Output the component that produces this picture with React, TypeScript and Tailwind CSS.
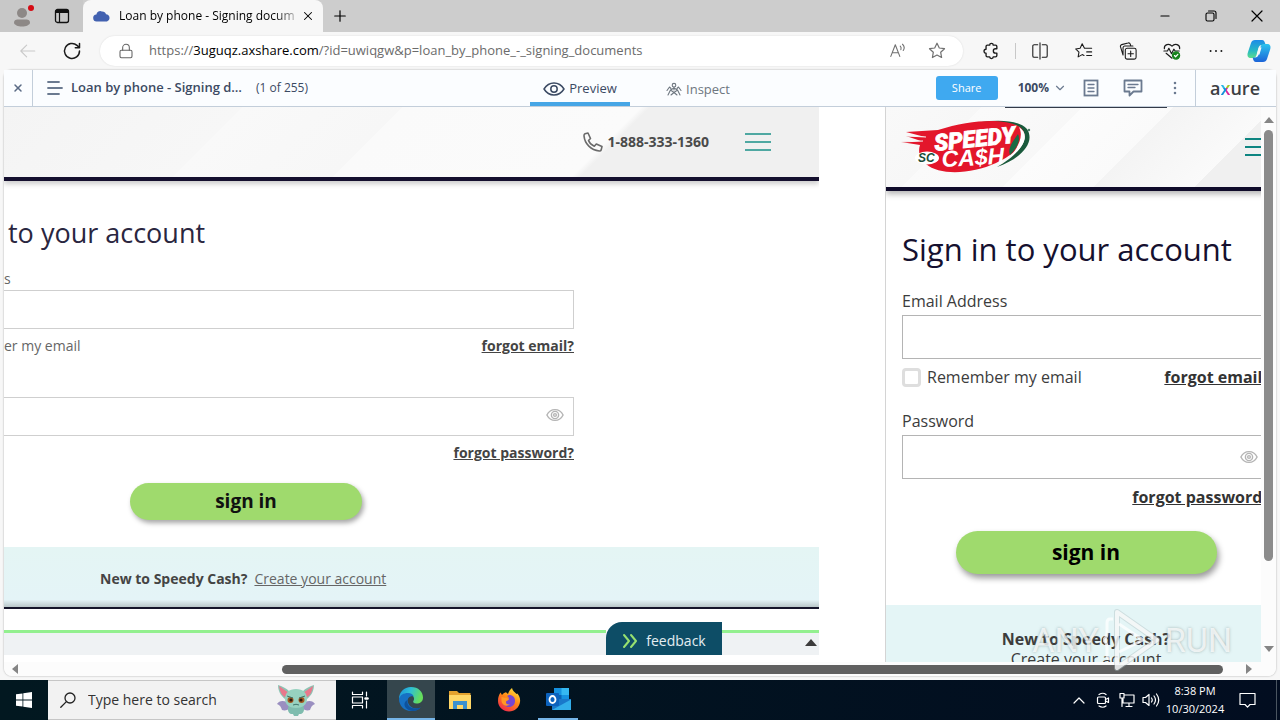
import React from "react";
import type { ReactNode } from "react";
import { ChevronDown, Lock, Minus, Plus, X } from "lucide-react";

interface IconProps {
  children: ReactNode;
  className?: string;
  box?: string;
  stroke?: number;
}

function Icon({ children, className = "size-5", box = "0 0 20 20", stroke = 1.2 }: IconProps) {
  return (
    <svg
      viewBox={box}
      className={className}
      fill="none"
      stroke="currentColor"
      strokeWidth={stroke}
      strokeLinecap="round"
      strokeLinejoin="round"
      aria-hidden="true"
    >
      {children}
    </svg>
  );
}

function ToolButton({ label, children }: { label: string; children: ReactNode }) {
  return (
    <button aria-label={label} className="flex h-8 w-11 shrink-0 items-center justify-center text-[#1b1b1b]">
      {children}
    </button>
  );
}

const STAR = "M10 2.2 12.3 7l5.2.7-3.8 3.6.9 5.2L10 14l-4.6 2.5.9-5.2L2.5 7.7 7.7 7z";

function TitleBar() {
  return (
    <header className="flex h-8 shrink-0 items-stretch bg-[#cdcdcd]">
      <div className="flex w-[83px] items-center gap-5 bg-[#c8c8c8] pl-3">
        <button aria-label="Profile">
          <svg viewBox="0 0 22 24" className="h-6 w-[22px]">
            <circle cx="10" cy="9" r="5" fill="#8d8886" />
            <path d="M2 18.500c0-2 1.500-3 3.500-3h9c2 0 3.500 1 3.500 3 0 2.500-4 4-8 4s-8-1.500-8-4z" fill="#8d8886" />
            <circle cx="19" cy="4" r="3" fill="#d50b14" />
          </svg>
        </button>
        <button aria-label="Tab actions">
          <svg viewBox="0 0 16 16" className="size-4" fill="none" stroke="#111">
            <rect x="1.500" y="1.500" width="13" height="13" rx="2" strokeWidth="1.300" />
            <path d="M1.500 3.500h13" strokeWidth="3" />
            <path d="M5.500 4v10" strokeWidth="1.200" />
          </svg>
        </button>
      </div>
      <div className="flex w-60 items-center rounded-t-lg bg-[#f7f7f7] pr-2 pl-2.5">
        <svg viewBox="0 0 18 12" className="h-3 w-[18px] shrink-0">
          <path
            d="M4 11.500a3.500 3.500 0 0 1-.6-7A3.800 3.800 0 0 1 9 1.500a4 4 0 0 1 4 2.800 3.700 3.700 0 0 1 1 7.200z"
            fill="#4261b0"
          />
        </svg>
        <span className="ml-2 flex-1 overflow-hidden bg-linear-to-r from-black from-85% to-[#ccc] bg-clip-text text-xs whitespace-nowrap text-transparent">
          Loan by phone - Signing docum
        </span>
        <button aria-label="Close tab" className="ml-1">
          <X className="size-3.5 text-black" strokeWidth={1.8} />
        </button>
      </div>
      <button aria-label="New tab" className="flex w-[34px] items-center justify-center">
        <Plus className="size-[18px] text-black" strokeWidth={1.6} />
      </button>
      <div className="flex-1" />
      <button aria-label="Minimize" className="flex w-[46px] items-center justify-center">
        <Minus className="size-3.5 text-black" strokeWidth={1.8} />
      </button>
      <button aria-label="Restore" className="flex w-[46px] items-center justify-center">
        <Icon className="size-3 text-black" box="0 0 12 12" stroke={1.1}>
          <rect x="1" y="3" width="8" height="8" rx="1.500" />
          <path d="M3.500 1H9a2 2 0 0 1 2 2v5.500" />
        </Icon>
      </button>
      <button aria-label="Close" className="flex w-[46px] items-center justify-center">
        <Icon className="size-3 text-black" box="0 0 12 12" stroke={1.2}>
          <path d="m1 1 10 10M11 1 1 11" />
        </Icon>
      </button>
    </header>
  );
}

function AddressBar() {
  return (
    <nav className="flex h-[38px] shrink-0 items-center bg-[#f7f7f7] pl-1.5">
      <button aria-label="Back" className="flex h-8 w-11 items-center justify-center text-[#c9c9c9]">
        <Icon className="size-[18px]">
          <path d="M17.500 10H2.500M8.500 3.500 2 10l6.500 6.500" />
        </Icon>
      </button>
      <ToolButton label="Refresh">
        <Icon stroke={1.5}>
          <path d="M17.500 10A7.500 7.500 0 1 1 15 4.400L17.300 6.500M17.500 2.500v4.200h-4.200" />
        </Icon>
      </ToolButton>
      <div className="mx-1.5 flex h-[30px] flex-1 items-center rounded-full bg-white pr-4 pl-[18px] shadow-[0_0_2px_rgba(0,0,0,0.12)]">
        <Lock className="size-4 text-[#666]" strokeWidth={1.6} />
        <div className="ml-[15px] flex-1 overflow-hidden text-[13px] whitespace-nowrap text-[#6b6b6b]">
          https://<span className="text-black">3uguqz.axshare.com</span>
          /?id=uwiqgw&amp;p=loan_by_phone_-_signing_documents
        </div>
        <button aria-label="Read aloud" className="mr-5 text-[#707070]">
          <Icon className="size-[18px]">
            <path d="m2 16 5-13 5 13M4 12h6M12.500 4.500c1 1 1.200 2.500.7 4M15 2.500c2 2 2.200 5 .8 7" />
          </Icon>
        </button>
        <button aria-label="Add to favorites" className="text-[#707070]">
          <Icon>
            <path d={STAR} />
          </Icon>
        </button>
      </div>
      <ToolButton label="Extensions">
        <Icon className="size-[18px]" stroke={1.5}>
          <path d="M4.500 8V5A1.500 1.500 0 0 1 6 3.500h2.500a2 2 0 0 1 4 0H15A1.500 1.500 0 0 1 16.500 5v2.500H15a2.400 2.400 0 0 0 0 4.800h1.500V15a1.500 1.500 0 0 1-1.500 1.500h-2.500a2 2 0 0 1-4 0H6A1.500 1.500 0 0 1 4.500 15v-2.500a2.200 2.200 0 0 1 0-4.500z" />
        </Icon>
      </ToolButton>
      <span className="mx-0.5 h-4 w-px bg-[#c8c8c8]" />
      <ToolButton label="Split screen">
        <Icon className="size-[18px]">
          <path d="M7.500 3H3.500A1.500 1.500 0 0 0 2 4.500v11A1.500 1.500 0 0 0 3.500 17h4M12.500 3h4A1.500 1.500 0 0 1 18 4.500v11a1.500 1.500 0 0 1-1.500 1.500h-4M10 1v18" />
        </Icon>
      </ToolButton>
      <ToolButton label="Favorites">
        <Icon className="size-[18px]">
          <path d="M11 7h7.500M13 11h5.500M13 15h5.500M10.500 7 8 2 5.700 7l-5 .7 3.700 3.600-.9 5.200L8 14l2 1" />
        </Icon>
      </ToolButton>
      <ToolButton label="Collections">
        <Icon className="size-[18px]">
          <rect x="7" y="7" width="12" height="12" rx="2" />
          <path d="M13 10v6M10 13h6M4.500 14.500 1.700 5.500a2 2 0 0 1 1.300-2.600l7-1.800a2 2 0 0 1 2.500 1.300l.6 1.900M4.500 14.500V6.500a2 2 0 0 1 2-2h9" />
        </Icon>
      </ToolButton>
      <ToolButton label="Browser essentials">
        <Icon className="size-[18px]" stroke={1.3}>
          <path d="M1.500 7.500C1 3 6.500.8 10 4.500c3.500-3.700 9-1.500 8.500 3M1 10h4l1.500-3 3 6L12 8l1.500 2H18M3.500 12.500 10 18" />
          <circle cx="14.500" cy="15" r="4" fill="#16821b" stroke="#16821b" />
          <path d="m12.700 15 1.300 1.400 2.500-2.600" stroke="#fff" />
        </Icon>
      </ToolButton>
      <ToolButton label="Settings and more">
        <Icon className="size-[18px]">
          <path d="M4 10h.01M10 10h.01M16 10h.01" strokeWidth="2.200" />
        </Icon>
      </ToolButton>
      <button aria-label="Copilot" className="flex w-[42px] shrink-0 items-center justify-center">
        <svg viewBox="0 0 24 24" className="size-6">
          <defs>
            <linearGradient id="copilotA" x1="0" y1="0" x2="0" y2="1">
              <stop offset="0" stopColor="#1d8be8" />
              <stop offset="0.600" stopColor="#27b9c4" />
              <stop offset="1" stopColor="#5cdd8c" />
            </linearGradient>
            <linearGradient id="copilotB" x1="0" y1="0" x2="0" y2="1">
              <stop offset="0" stopColor="#2cc4ee" />
              <stop offset="1" stopColor="#1c64d8" />
            </linearGradient>
          </defs>
          <path d="M8 1h7c2 0 2.500 1.500 3 3l.7 2H15c-2 0-3 1-3.600 3L9.500 16c-.6 2-1.500 3-3.500 3H4c-3 0-4-2-3.300-5L4 4c.6-2 2-3 4-3z" fill="url(#copilotA)" />
          <path d="M16 23H9c-2 0-2.500-1.500-3-3l-.3-1.500H8c2 0 3-1 3.600-3L13.500 8c.6-2 1.500-3 3.500-3h3c3 0 4 2 3.300 5L20 20c-.6 2-2 3-4 3z" fill="url(#copilotB)" />
          <path d="M11.500 9.500 10 15.500h2.500l2-7h-1.500z" fill="#f7f7f7" />
        </svg>
      </button>
    </nav>
  );
}

function AxureBar() {
  return (
    <div className="flex h-[37px] shrink-0 items-stretch border-b border-[#c3ceda] bg-[#fbfdff] text-xs text-[#3b4a63]">
      <div className="flex flex-1 items-center">
        <button aria-label="Close" className="flex w-[29px] items-center justify-center self-stretch border-r border-[#c3ceda]">
          <X className="size-3 text-[#5b6b85]" strokeWidth={3} />
        </button>
        <button aria-label="Project pages" className="ml-3.5 text-[#6b7a90]">
          <Icon className="size-4" box="0 0 16 16" stroke={1.8}>
            <path d="M1 2h11M1 8h14M1 14h11" />
          </Icon>
        </button>
        <span className="ml-2 text-[13px] font-semibold">Loan by phone - Signing d…</span>
        <span className="ml-3.5">(1 of 255)</span>
      </div>
      <div className="flex items-stretch gap-5">
        <button className="flex w-[100px] items-center justify-center gap-1 border-b-4 border-[#46a6e6] pt-1.5 text-[13px]">
          <Icon className="h-4 w-[22px]" box="0 0 22 16" stroke={1.5}>
            <path d="M1 8c5-8 15-8 20 0-5 8-15 8-20 0z" />
            <circle cx="11" cy="8" r="3.200" />
          </Icon>
          Preview
        </button>
        <button className="flex w-[100px] items-center justify-center gap-1 pt-1 pr-1 text-[13px] text-[#6e7780]">
          <Icon className="size-4" box="0 0 16 16" stroke={1.1}>
            <path d="M8 5v3M4.500 8 8 6l3.500 2L8 10.500zM4.500 8 2 13M11.500 8l2.500 5M8 10.500 5 13M8 10.500l3 2.500" />
            <circle cx="8" cy="3.200" r="1.800" />
            <path d="M1 8.500 3.500 5 5 6.500M15 8.500 12.500 5 11 6.500" />
          </Icon>
          Inspect
        </button>
      </div>
      <div className="flex flex-1 items-center justify-end">
        <button className="h-6 w-[62px] rounded-[3px] bg-[#3fa9f0] text-[11px] text-white">Share</button>
        <button className="ml-5 flex items-center gap-1 font-bold">
          100%
          <ChevronDown className="size-3.5 text-[#6b7a90]" />
        </button>
        <button aria-label="Notes" className="ml-4 text-[#6b7a90]">
          <Icon className="h-[18px] w-4" box="0 0 16 18" stroke={1.8}>
            <rect x="1.500" y="1.500" width="13" height="15" strokeLinejoin="miter" />
            <path d="M5 5.500h6M5 9h6M5 12.500h6" strokeWidth="1.300" />
          </Icon>
        </button>
        <button aria-label="Comments" className="ml-6 text-[#6b7a90]">
          <Icon className="h-[18px] w-5" box="0 0 20 18" stroke={1.8}>
            <path d="M1.500 1.500h17v11h-8l-4 4v-4h-5z" />
            <path d="M5 5.500h10M5 8.500h7" strokeWidth="1.300" />
          </Icon>
        </button>
        <button aria-label="More" className="mr-3 ml-6 text-[#6b7a90]">
          <Icon className="size-4" box="0 0 16 16" stroke={2.6}>
            <path d="M8 3h.01M8 8h.01M8 13h.01" />
          </Icon>
        </button>
        <div className="flex items-center self-stretch border-l border-[#c3ceda] pr-4 pl-3.5 text-lg font-semibold text-[#3c3f44]">
          <span>
            a
            <span className="bg-[conic-gradient(#a6c626_0deg_90deg,#d8269a_90deg_180deg,#1690d8_180deg_270deg,#2ab8e6_270deg_360deg)] bg-clip-text text-transparent">
              x
            </span>
            ure
          </span>
        </div>
      </div>
    </div>
  );
}

function Burger({ className }: { className: string }) {
  return (
    <svg viewBox="0 0 26 20" className={className} fill="none" stroke="currentColor" strokeWidth="2.200">
      <path d="M0 2h26M0 10h26M0 18h26" />
    </svg>
  );
}

function EyeIcon() {
  return (
    <Icon className="h-[18px] w-[18px] text-[#b5b5b5]" stroke={1.6}>
      <path d="M1 10c4-8 14-8 18 0-4 8-14 8-18 0z" />
      <circle cx="10" cy="10" r="4" />
      <circle cx="10" cy="10" r="1.500" />
    </Icon>
  );
}

function DesktopFrame() {
  return (
    <section className="w-[815px] shrink-0 overflow-hidden bg-white text-[#666]">
      <div className="flex h-[74px] items-center justify-end border-b-4 border-[#15102f] bg-[linear-gradient(135deg,#f4f4f4_0%,#f7f7f7_27%,#f9f9f9_27%,#f7f7f7_45%,#fafafa_45%,#fbfbfb_72%,#f0f0f0_73%)] pr-12 shadow-[0_3px_5px_rgba(0,0,0,0.2)]">
        <Icon className="size-5 text-[#6b6b6b]" stroke={1.6}>
          <path d="M2 1.800 5 1l2.500 5.500-2 2c1 2.500 3 4.600 5.800 5.800l2-2.300L19 14.500l-.8 3.400c-.3.800-1 1.200-1.900 1.100C8 18 1.800 12 1 3.800c0-1 .3-1.700 1-2z" />
        </Icon>
        <span className="ml-1 text-sm font-bold text-[#4a4a4a]">1-888-333-1360</span>
        <button aria-label="Menu" className="ml-9 text-[#4fa8a2]">
          <Burger className="h-5 w-[26px]" />
        </button>
      </div>
      <form className="w-[570px]" onSubmit={(e) => e.preventDefault()}>
        <h1 className="pt-8 pl-1 text-[27px] leading-10 text-[#2a2640]">to your account</h1>
        <label htmlFor="desk-email" className="mt-4 block h-[21px] text-sm">
          s
        </label>
        <input id="desk-email" type="text" className="block h-[39px] w-full border border-l-0 border-[#cfcfcf] px-3" />
        <div className="flex h-[34px] items-center justify-between text-sm">
          <span>er my email</span>
          <a href="#forgot-email" className="font-bold text-[#444] underline">
            forgot email?
          </a>
        </div>
        <div className="relative mt-[34px]">
          <input
            aria-label="Account password"
            type="password"
            className="block h-[39px] w-full border border-l-0 border-[#cfcfcf] px-3"
          />
          <span className="absolute inset-y-0 right-2.5 flex items-center pb-1">
            <EyeIcon />
          </span>
        </div>
        <div className="flex h-[34px] items-center justify-end text-sm">
          <a href="#forgot-password" className="font-bold text-[#444] underline">
            forgot password?
          </a>
        </div>
        <div className="mt-[13px] ml-[126px] pb-[27px]">
          <button className="h-[37px] w-[232px] rounded-full bg-[#9fda6d] text-[19px] font-bold text-[#111] shadow-[2px_3px_5px_rgba(0,0,0,0.35)]">
            sign in
          </button>
        </div>
      </form>
      <div className="h-[62px] border-b-2 border-[#15152a] bg-[linear-gradient(#e4f5f4_0%,#e4f4f7_88%,#b9c6c8_100%)] pt-[22px] pl-24 text-sm">
        <strong className="font-bold text-[#444]">New to Speedy Cash?</strong>
        <a href="#create" className="ml-[7px] text-[#666] underline">
          Create your account
        </a>
      </div>
      <div className="mt-[13px] flex h-[33px] items-end">
        <div className="h-[25px] flex-1 border-t-3 border-[#93f08f] bg-[#eff2f4]" />
        <button className="flex h-[33px] w-[116px] items-center justify-center gap-2 rounded-tl-2xl bg-[#0d4d66] pt-1 text-sm text-[#e4eef2]">
          <Icon className="size-4 text-[#96e070]" box="0 0 16 16" stroke={2}>
            <path d="m2 2 5 6-5 6M9 2l5 6-5 6" />
          </Icon>
          feedback
        </button>
        <div className="flex h-[25px] w-[97px] items-start justify-end border-t-3 border-[#93f08f] bg-[#eff2f4] pt-1.5 pr-0.5">
          <svg viewBox="0 0 12 7" className="h-[7px] w-3">
            <path d="M0 7 6 0l6 7z" fill="#3c3c3c" />
          </svg>
        </div>
      </div>
    </section>
  );
}

function SpeedyCashLogo() {
  return (
    <svg viewBox="0 0 132 58" className="h-[58px] w-[132px] shrink-0" role="img" aria-label="Speedy Cash">
      <path d="M60 8C88 1 117 0 127 11c9 14-7 30-30 38 16-9 33-24 26-36C116 3 88 4 60 8z" fill="#1a5a3c" />
      <path d="M38 12C72 1 106 0 120 9c12 10-2 26-24 36-24 11-56 13-70 1-7-6-8-13-6-19l-19-3 20-1-15-5 19 1L6 14z" fill="#e3162b" />
      <path d="M1 24l22-1M6 18l20 1" stroke="#f7f7f7" strokeWidth="1" />
      <path d="M119 9c12 8 4 21-9 30 8-10 14-20 9-30z" fill="#fff" />
      <path d="M118 16c3 6-1 14-8 21-2-5 0-10 8-21z" fill="#1a6b45" />
      <ellipse cx="27" cy="40" rx="12" ry="6.500" fill="#fff" />
      <text x="18" y="44" fontSize="12" className="fill-[#1a4d38] font-['Liberation_Sans'] font-bold italic">
        SC
      </text>
      <text
        x="35"
        y="33"
        fontSize="23"
        transform="rotate(-6 35 33)"
        stroke="#fff"
        strokeWidth="0.800"
        className="fill-white font-['Roboto','Liberation_Sans'] font-black italic"
      >
        SPEEDY
      </text>
      <text
        x="42"
        y="49"
        fontSize="23"
        transform="rotate(-3 42 49)"
        className="fill-white font-['Liberation_Sans'] font-bold italic"
      >
        CA$H
      </text>
      <circle cx="129" cy="12" r="1.200" fill="#4c8068" />
    </svg>
  );
}

function MobileFrame() {
  return (
    <section className="relative min-w-0 flex-1 overflow-hidden border-l border-[#d4d4d4] bg-white text-[#3c3c3c]">
      <span className="absolute top-0 left-[119px] z-10 h-px w-[162px] bg-[#333a48]" />
      <div className="w-[400px] text-base">
        <div className="flex h-[84px] items-center justify-between border-b-4 border-[#0f0b2a] bg-[linear-gradient(135deg,#f9f9f9_0%,#f7f7f7_20%,#fafafa_20%,#f8f8f8_41%,#fcfcfc_41%,#fafafa_60%,#f4f4f4_60%,#fafafa_81%,#f0f0f0_81%)] pr-[15px] pl-3.5 shadow-[0_3px_6px_rgba(0,0,0,0.3)]">
          <SpeedyCashLogo />
          <button aria-label="Menu" className="text-[#0e8581]">
            <Burger className="h-5 w-[26px]" />
          </button>
        </div>
        <form className="px-4" onSubmit={(e) => e.preventDefault()}>
          <h2 className="pt-9 text-[31px] leading-[44px] whitespace-nowrap text-[#15102f]">Sign in to your account</h2>
          <label htmlFor="mob-email" className="mt-[18px] flex h-[26px] items-start">
            Email Address
          </label>
          <input id="mob-email" type="text" className="block h-11 w-full border border-[#b4b4b4] px-3" />
          <div className="flex h-9 items-center justify-between">
            <label className="flex items-center gap-1.5">
              <input type="checkbox" className="size-[19px] appearance-none rounded-sm border-3 border-[#dedede] bg-white" />
              Remember my email
            </label>
            <a href="#forgot-email" className="font-bold text-[#333] underline">
              forgot email?
            </a>
          </div>
          <label htmlFor="mob-password" className="mt-3.5 flex h-[26px] items-start">
            Password
          </label>
          <div className="relative">
            <input id="mob-password" type="password" className="block h-11 w-full border border-[#b4b4b4] px-3" />
            <span className="absolute inset-y-0 right-3 flex items-center">
              <EyeIcon />
            </span>
          </div>
          <div className="flex h-9 items-center justify-end">
            <a href="#forgot-password" className="font-bold text-[#333] underline">
              forgot password?
            </a>
          </div>
          <div className="flex justify-center pt-4 pb-[31px]">
            <button className="h-[43px] w-[261px] rounded-full bg-[#9fda6d] text-[21px] font-bold text-black shadow-[2px_4px_6px_rgba(0,0,0,0.4)]">
              sign in
            </button>
          </div>
        </form>
        <div className="flex h-24 flex-col items-center bg-[#e4f5f6] pt-6 leading-5">
          <strong className="font-bold">New to Speedy Cash?</strong>
          <a href="#create">Create your account</a>
        </div>
      </div>
    </section>
  );
}

function Arrow({ d }: { d: string }) {
  return (
    <svg viewBox="0 0 10 10" className="size-2.5 shrink-0" fill="#858585">
      <path d={d} />
    </svg>
  );
}

function Watermark() {
  return (
    <div className="pointer-events-none absolute right-11 bottom-[5px] z-20 flex items-center gap-1 font-['Roboto','Liberation_Sans'] text-[34px] leading-none text-white/75 [text-shadow:0_0_3px_rgba(120,140,140,0.6)]">
      <span>ANY</span>
      <svg viewBox="0 0 58 62" className="h-[62px] w-[58px]" fill="none" strokeLinejoin="round">
        <g stroke="#a9bcbe" strokeOpacity="0.4" strokeWidth="6">
          <path d="M14 3 54 31 14 59z" />
        </g>
        <g stroke="#fff" strokeOpacity="0.75" strokeWidth="4">
          <path d="M14 3 54 31 14 59z" />
          <path d="M10 10H7c-2 0-3 1-3 4v10c0 4-2 6-4 7 2 1 4 3 4 7v8c0 3 1 4 4 4" strokeWidth="3" />
          <path d="M16 15 40 31 16 43" strokeWidth="3" />
        </g>
      </svg>
      <span>RUN</span>
    </div>
  );
}

function Viewer() {
  return (
    <main className="relative mx-1 mb-1 flex min-h-0 flex-1 flex-col rounded-lg bg-white shadow-[0_0_2px_rgba(0,0,0,0.35)]">
      <AxureBar />
      <div className="flex min-h-0 flex-1">
        <div className="flex min-w-0 flex-1 gap-[66px] overflow-hidden bg-white">
          <DesktopFrame />
          <MobileFrame />
        </div>
        <div className="flex w-[15px] shrink-0 flex-col items-center bg-[#fcfcfc] py-2">
          <Arrow d="M0 8 5 2l5 6z" />
          <div className="mt-[5px] w-[9px] flex-[431] rounded-full bg-[#8b8b8b]" />
          <div className="flex-[83]" />
          <Arrow d="M0 2 5 8l5-6z" />
        </div>
      </div>
      <div className="flex h-3.5 shrink-0 items-center rounded-b-lg bg-[#fcfcfc] pr-[22px] pl-1.5">
        <Arrow d="M8 0 2 5l6 5z" />
        <div className="flex-[262]" />
        <div className="h-[9px] flex-[941] rounded-full bg-[#606060]" />
        <div className="flex-[21]" />
        <Arrow d="M2 0 8 5l-6 5z" />
      </div>
      <Watermark />
    </main>
  );
}

function DragonArt() {
  return (
    <svg viewBox="0 0 40 34" className="h-[34px] w-10">
      <path d="M11 19C6 17 3 18 1 21c3 1 4 3 5 6 3 1 6 0 8-2zM29 19c5-2 8-1 10 2-3 1-4 3-5 6-3 1-6 0-8-2z" fill="#9a8fc0" />
      <path d="M14 9C10 5 6 3 2 2c0 5 2 10 7 14zM26 9c4-4 8-6 12-7 0 5-2 10-7 14z" fill="#8dc4b4" />
      <path d="M13 10C9 7 6 5 3 3c1 5 2 9 7 12zM27 10c4-3 7-5 10-7-1 5-2 9-7 12z" fill="#e8788c" />
      <path d="M13 22h14c2 4 1 8-2 9h-2l-1 2h-4l-1-2h-2c-3-1-4-5-2-9z" fill="#7fbcae" />
      <path d="M20 6c7 0 11 4 11 10 0 6-5 9-11 9S9 22 9 16C9 10 13 6 20 6z" fill="#97d2c0" />
      <circle cx="14.500" cy="17" r="3" fill="#a45a20" />
      <circle cx="25.500" cy="17" r="3" fill="#a45a20" />
      <circle cx="15" cy="17" r="1.600" fill="#2c1a10" />
      <circle cx="25" cy="17" r="1.600" fill="#2c1a10" />
      <path d="m11 13 6 2M29 13l-6 2M17 22q3-1.500 6 0" stroke="#41756a" fill="none" />
    </svg>
  );
}

function Taskbar() {
  return (
    <footer className="flex h-10 shrink-0 items-stretch bg-linear-to-r from-[#021820] to-[#020d20] text-white">
      <button aria-label="Start" className="flex w-12 items-center justify-center">
        <svg viewBox="0 0 16 16" className="size-4" fill="#fff">
          <path d="M0 2.300 6.500 1.400v6.200H0zM7.300 1.300 16 0v7.600H7.300zM0 8.400h6.500v6.200L0 13.700zM7.300 8.400H16V16l-8.700-1.300z" />
        </svg>
      </button>
      <label className="flex w-72 items-center border-y border-[#c6c6c6] bg-[#f2f2f2] pr-5 pl-3 text-[#333]">
        <Icon className="size-4 text-[#222]" box="0 0 16 16" stroke={1.3}>
          <circle cx="10" cy="6" r="5" />
          <path d="M6.400 9.600.8 15.200" />
        </Icon>
        <input
          aria-label="Search"
          placeholder="Type here to search"
          className="ml-3 min-w-0 flex-1 bg-transparent text-sm outline-none placeholder:text-[#333]"
        />
        <DragonArt />
      </label>
      <button aria-label="Task view" className="mr-[3px] flex w-12 items-center justify-center">
        <Icon className="size-[18px]" box="0 0 18 18" stroke={1.2}>
          <path d="M1.500 1v2.500h10V1M1.500 17v-2.500h10V17M1.500 6h10v6h-10zM15.500 1v4M15.500 10v7" />
          <path d="M14.500 7.500h2" strokeWidth="2.500" />
        </Icon>
      </button>
      <div className="flex items-stretch gap-px">
        <button aria-label="Microsoft Edge" className="flex w-12 items-center justify-center border-b-2 border-[#76b5e8] bg-[#35464d]">
          <svg viewBox="0 0 24 24" className="size-6">
            <defs>
              <linearGradient id="edgeTop" x1="0" y1="0" x2="1" y2="0.300">
                <stop offset="0" stopColor="#1b8fdb" />
                <stop offset="0.500" stopColor="#2ec0d5" />
                <stop offset="1" stopColor="#66de5c" />
              </linearGradient>
            </defs>
            <path d="M0 12C0 5 5 0 12 0c7.500 0 12 5 12 10.500 0 4-3 6-6.500 6-3 0-4-1.500-3-2.700 1.500-2 .3-6.300-4.500-6.300-4 0-8 1.500-10 4.500z" fill="url(#edgeTop)" />
            <path d="M0 12c1-4 4.500-6 9-6 3 0 5 1.500 5.700 3.500C11 8.500 8.500 11 8.700 14c.3 4 4 7.500 8.800 7.500 1.500 0 3-.4 4.200-1C19.500 23 16 24 12 24 5 24 0 18.500 0 12z" fill="#1771c4" />
            <path d="M8.500 13c-1 6 4 10.500 13.200 7.500C18 25 10 25 6.500 20.500 4.500 17.500 5.500 14.500 8.500 13z" fill="#0e529d" />
          </svg>
        </button>
        <button aria-label="File Explorer" className="flex w-12 items-center justify-center">
          <svg viewBox="0 0 22 20" className="h-5 w-[22px]">
            <path d="M0 1h8l2 2h11.500v16H0z" fill="#e4a22e" />
            <path d="M0 5h22v14H0z" fill="#ffd767" />
            <path d="M4 11h14v8h-4v-4H8v4H4z" fill="#3c91cf" />
          </svg>
        </button>
        <button aria-label="Firefox" className="flex w-12 items-center justify-center">
          <svg viewBox="0 0 24 24" className="size-6">
            <defs>
              <linearGradient id="fox" x1="0.800" y1="0" x2="0.200" y2="1">
                <stop offset="0" stopColor="#ffe33c" />
                <stop offset="0.450" stopColor="#ff8a16" />
                <stop offset="1" stopColor="#f0234f" />
              </linearGradient>
            </defs>
            <path d="M1 13C1 9 2 7 3.500 4.500L5 7c1.500-2 3-2.500 4-2.700L11 6c1-3 2-4.500 4-6 .5 3 3 4 4.500 6l.8-.5C22.500 8 23.500 10.500 23 14c-.7 5.500-5.300 9.500-11 9.500S1 19 1 13z" fill="url(#fox)" />
            <path d="M12 7c4 0 6 2.500 6 6s-2.500 6-6 6-6-2.500-6-5.500c0-1.500.5-2.500 1.500-3.500 1 1 3 .5 4.500 1 0-1.500-1-2.500-2-3z" fill="#7546d2" />
            <path d="M4.500 9c2 0 3 1 5 .8l2.500 1.500c-1 1.800-3 1-3 3s2 2.500 4 2c-3 3-8 1-8.500-3z" fill="#ff9825" />
          </svg>
        </button>
        <button aria-label="Outlook" className="ml-1 flex w-10 items-center justify-center border-b-2 border-[#76b5e8]">
          <svg viewBox="0 0 26 24" className="h-6 w-[26px]">
            <path d="M9 1h15v14H9z" fill="#1591e0" />
            <path d="M16.500 1H24v7h-7.500z" fill="#35b8f1" />
            <path d="M9 8h7.500v7H9z" fill="#0a62b4" />
            <path d="M7 12h19v11H7z" fill="#1978ca" />
            <path d="m7 23 19-10.500V23z" fill="#32aeea" />
            <rect x="1" y="6" width="13" height="13" rx="1" fill="#0c62bd" />
            <ellipse cx="7.500" cy="12.500" rx="3" ry="3.500" fill="none" stroke="#fff" strokeWidth="1.800" />
          </svg>
        </button>
      </div>
      <div className="flex flex-1 items-center justify-end">
        <button aria-label="Show hidden icons" className="flex w-6 justify-center">
          <Icon className="size-3" box="0 0 12 12">
            <path d="m1 9 5-5 5 5" />
          </Icon>
        </button>
        <button aria-label="Meet now" className="flex w-6 justify-center">
          <Icon className="size-4" box="0 0 16 16">
            <rect x="2.500" y="5" width="8" height="6.500" rx="1" />
            <path d="m10.500 7.500 3-1.500v4.500l-3-1.500M4 2.500q4-2.500 7 0M4 14q4 2.500 7 0" />
          </Icon>
        </button>
        <button aria-label="Network" className="flex w-6 justify-center">
          <Icon className="size-4" box="0 0 16 16">
            <path d="M5.500 3H15v8H4V7M7 14.500h6M10 11v3.500M1 1.500h4V6H1zM3 6v8.500" />
          </Icon>
        </button>
        <button aria-label="Volume" className="flex w-6 justify-center">
          <Icon className="h-4 w-[18px]" box="0 0 18 16">
            <path d="M1 5.500h2.500L7 2.500v11l-3.500-3H1zM9.500 6q1.500 2 0 4M12 4q3 4 0 8M14.500 2q4.500 6 0 12" />
          </Icon>
        </button>
        <div className="ml-0.5 w-[60px] text-center text-[11px] leading-[18px]">
          <div>8:38 PM</div>
          <div>10/30/2024</div>
        </div>
        <button aria-label="Notifications" className="mr-5 ml-3.5">
          <Icon className="h-[18px] w-[17px]" box="0 0 17 18">
            <path d="M1 2.500h15v11h-5l-2.500 2.700L6 13.500H1z" />
          </Icon>
        </button>
        <span className="mr-[3px] h-10 w-px bg-[#4a5560]" />
      </div>
    </footer>
  );
}

export default function App() {
  return (
    <div className="flex h-screen flex-col overflow-hidden bg-[#f7f7f7] font-['Open_Sans','Noto_Sans',sans-serif]">
      <TitleBar />
      <AddressBar />
      <Viewer />
      <Taskbar />
    </div>
  );
}
